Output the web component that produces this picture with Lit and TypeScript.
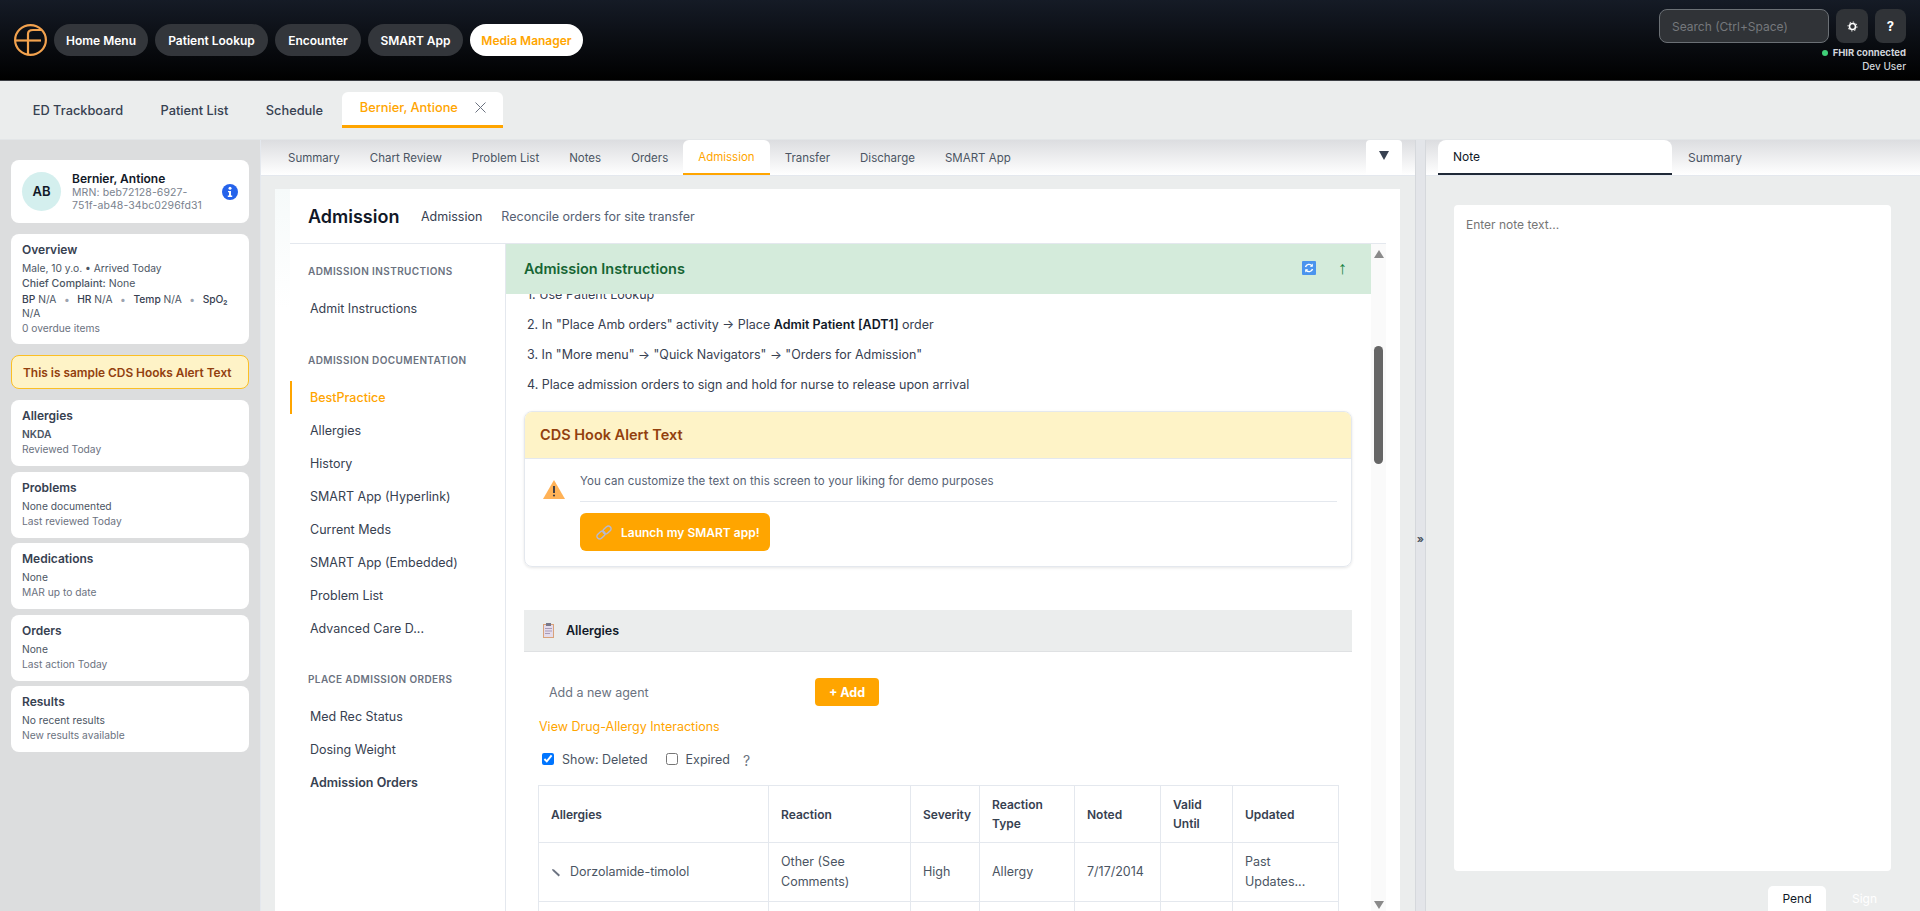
import {css, html, LitElement} from "lit"
import {customElement} from "lit/decorators.js"

const navPills = ["Home Menu", "Patient Lookup", "Encounter", "SMART App"]
const chartTabs = ["Summary", "Chart Review", "Problem List", "Notes", "Orders", "Admission", "Transfer", "Discharge", "SMART App"]
const summaries = [
  ["Allergies", "NKDA", "Reviewed Today"],
  ["Problems", "None documented", "Last reviewed Today"],
  ["Medications", "None", "MAR up to date"],
  ["Orders", "None", "Last action Today"],
  ["Results", "No recent results", "New results available"],
]
const sections = [
  {title: "Admission Instructions", items: ["Admit Instructions"]},
  {
    title: "Admission Documentation",
    items: ["BestPractice", "Allergies", "History", "SMART App (Hyperlink)", "Current Meds", "SMART App (Embedded)", "Problem List", "Advanced Care D..."],
  },
  {title: "Place Admission Orders", items: ["Med Rec Status", "Dosing Weight", "Admission Orders"]},
]

@customElement("app-root")
export class AppRoot extends LitElement {
  static styles = css`
    :host {
      display: block;
      height: 911px;
      overflow: hidden;
      font-family: Inter, "Liberation Sans", sans-serif;
      color: #374151;
      background: #ebeded;
    }
    * {
      box-sizing: border-box;
    }
    input,
    textarea {
      font-family: inherit;
    }
    .header {
      height: 81px;
      display: flex;
      align-items: flex-start;
      justify-content: space-between;
      padding: 0 14px;
      background: linear-gradient(#151b26, #000);
      border-bottom: 1px solid #3d4045;
    }
    .pills {
      display: flex;
      align-items: center;
      gap: 7px;
      margin-top: 24px;
    }
    .logo {
      width: 33px;
      height: 32px;
    }
    .pill {
      height: 32px;
      display: flex;
      align-items: center;
      justify-content: center;
      border-radius: 16px;
      background: #33363b;
      color: #fff;
      font-size: 12px;
      font-weight: 600;
    }
    .pill:nth-of-type(1) {
      width: 94px;
    }
    .pill:nth-of-type(2),
    .pill:nth-of-type(5) {
      width: 113px;
    }
    .pill:nth-of-type(3) {
      width: 86px;
    }
    .pill:nth-of-type(4) {
      width: 95px;
    }
    .pill.active {
      background: #fff;
      color: #ffa500;
    }
    .tools {
      display: flex;
      flex-direction: column;
      align-items: flex-end;
      padding-top: 9px;
    }
    .tool-row {
      display: flex;
      gap: 7px;
      height: 34px;
    }
    .search {
      width: 170px;
      height: 34px;
      padding: 0 12px;
      background: #303337;
      border: 1px solid #6b7075;
      border-radius: 8px;
      font-size: 12px;
      color: #fff;
      outline: none;
    }
    .search::placeholder {
      color: #75787c;
    }
    .tool-btn {
      width: 32px;
      height: 34px;
      display: flex;
      align-items: center;
      justify-content: center;
      border-radius: 8px;
      background: #303337;
      color: #fff;
      font-size: 13px;
      font-weight: 700;
    }
    .tool-btn.help {
      width: 31px;
    }
    .status {
      display: flex;
      align-items: center;
      gap: 5px;
      margin-top: 3px;
      height: 13px;
      font-size: 9.5px;
      font-weight: 700;
      color: #d1d5db;
    }
    .dot {
      width: 6px;
      height: 6px;
      border-radius: 50%;
      background: #3fcf78;
    }
    .user {
      margin-top: 1px;
      font-size: 10px;
      font-weight: 500;
      color: #d1d5db;
    }
    .top-tabs {
      height: 59px;
      padding: 11px 0 0 14px;
      display: flex;
      align-items: flex-start;
      border-bottom: 1px solid #e3e6e8;
    }
    .top-tab {
      height: 36px;
      padding: 0 18.75px;
      display: flex;
      align-items: center;
      font-size: 12.8px;
      font-weight: 500;
      color: #374151;
    }
    .top-tab.active {
      width: 161px;
      padding: 0 0 3px 18px;
      gap: 17px;
      background: #fff;
      color: #ffa500;
      border-bottom: 3px solid #ffa500;
      border-radius: 6px 6px 0 0;
    }
    .close {
      width: 11px;
      height: 11px;
    }
    .main {
      height: 771px;
      display: flex;
    }
    .side {
      width: 261px;
      padding: 20px 11px 0;
      background: #dcddde;
      border-right: 1px solid #e4e8ee;
      display: flex;
      flex-direction: column;
      gap: 5.5px;
    }
    .card {
      width: 238px;
      background: #fff;
      border-radius: 8px;
      padding: 8px 11px;
      font-size: 10.25px;
      line-height: 15px;
      color: #4b5563;
    }
    .card h4 {
      margin: 0 0 3px;
      font-size: 12px;
      line-height: 16px;
      font-weight: 600;
      color: #374151;
    }
    .card .muted {
      color: #6b7280;
    }
    .patient {
      height: 63px;
      margin-bottom: 5.5px;
      padding: 0 11px;
      display: flex;
      align-items: center;
    }
    .avatar {
      width: 39px;
      height: 39px;
      flex: none;
      border-radius: 50%;
      background: #d4efee;
      display: flex;
      align-items: center;
      justify-content: center;
      font-size: 13px;
      font-weight: 600;
      color: #111827;
    }
    .who {
      flex: 1;
      margin-left: 11px;
    }
    .who b {
      display: block;
      font-size: 12px;
      line-height: 14px;
      font-weight: 600;
      color: #111827;
    }
    .who span {
      display: block;
      font-size: 10.5px;
      line-height: 13px;
      letter-spacing: 0.1px;
      color: #7a828e;
    }
    .overview {
      height: 110px;
      margin-bottom: 5.5px;
    }
    .chief {
      font-size: 10.5px;
    }
    .chief b {
      font-weight: 500;
    }
    .vitals {
      margin: 1px 0;
      line-height: 14px;
    }
    .vitals b {
      font-weight: 500;
      color: #374151;
    }
    .vitals i {
      font-style: normal;
      margin: 0 7.5px;
      color: #9ca3af;
    }
    .side-alert {
      width: 238px;
      height: 34px;
      margin-bottom: 5.5px;
      padding-left: 11px;
      display: flex;
      align-items: center;
      background: #fef3c7;
      border: 1px solid #fbbf24;
      border-radius: 8px;
      font-size: 11.9px;
      font-weight: 600;
      color: #92400e;
    }
    .summary {
      height: 66px;
    }
    .nkda {
      font-weight: 600;
    }
    .center {
      width: 1154px;
      display: flex;
      flex-direction: column;
    }
    .bar {
      height: 36px;
      flex: none;
      display: flex;
      background: linear-gradient(#dcdde0, #fff);
      border-bottom: 1px solid #e4e8ee;
    }
    .center .bar {
      padding-left: 12px;
    }
    .chart-tab {
      padding: 0 15px;
      display: flex;
      align-items: center;
      font-size: 11.5px;
      color: #4b5563;
    }
    .chart-tab.active {
      background: #fff;
      color: #ffa500;
      border-bottom: 2px solid #ffa500;
      border-radius: 6px 6px 0 0;
    }
    .more {
      width: 36px;
      margin: 0 13px 0 auto;
      display: flex;
      align-items: center;
      justify-content: center;
      padding-bottom: 4px;
      background: #fff;
      border-radius: 4px 4px 0 0;
    }
    .page {
      height: 722px;
      margin: 13px 15px 0 14px;
      padding-right: 14px;
      display: flex;
      background: #fff;
    }
    .strip {
      width: 15px;
      flex: none;
      height: 120px;
      background: linear-gradient(#f6fafa, #fff);
    }
    .page-body {
      flex: 1;
      min-width: 0;
      display: flex;
      flex-direction: column;
    }
    .page-head {
      height: 55px;
      flex: none;
      padding: 0 0 0 18px;
      display: flex;
      align-items: center;
      border-bottom: 1px solid #e4e8ee;
      font-size: 12.5px;
    }
    .page-head h2 {
      margin: 0 22px 0 0;
      width: 91px;
      font-size: 18px;
      font-weight: 600;
      color: #111827;
    }
    .page-head .crumb {
      margin-right: 19px;
      color: #374151;
    }
    .page-head .desc {
      color: #566173;
    }
    .cols {
      flex: 1;
      min-height: 0;
      display: flex;
    }
    .nav {
      width: 216px;
      flex: none;
      padding-top: 20px;
      border-right: 1px solid #e4e8ee;
    }
    .nav h5 {
      margin: 0;
      padding-left: 18px;
      height: 14px;
      line-height: 14px;
      font-size: 10px;
      font-weight: 600;
      letter-spacing: 0.4px;
      text-transform: uppercase;
      color: #6b7280;
    }
    .nav ul {
      list-style: none;
      margin: 14px 0 27.5px;
      padding: 0;
    }
    .nav li {
      height: 33px;
      line-height: 33px;
      padding-left: 20px;
      font-size: 12.5px;
      color: #374151;
    }
    .nav li.current {
      padding-left: 18px;
      border-left: 2px solid #ffa500;
      color: #ffa500;
      font-weight: 500;
    }
    .nav li.strong {
      font-weight: 600;
    }
    .content {
      flex: 1;
      min-width: 0;
      display: flex;
    }
    .scroll {
      flex: 1;
      min-width: 0;
      overflow: hidden;
    }
    .instr-head {
      height: 50px;
      padding: 0 0 2px 18px;
      padding-right: 24px;
      display: flex;
      align-items: center;
      background: #d4ebdb;
      font-size: 14.5px;
      font-weight: 600;
      color: #166534;
    }
    .instr-head span {
      flex: 1;
    }
    .up {
      margin-left: 22px;
      font-family: "Liberation Sans", sans-serif;
      font-size: 18px;
      font-weight: 400;
      color: #15803d;
    }
    .scroll-inner {
      height: 618px;
      overflow: hidden;
      padding: 0 19px 0 18px;
    }
    ol {
      list-style: none;
      margin: -14px 0 11px;
      padding-left: 3px;
      font-size: 12.5px;
      color: #374151;
    }
    ol li {
      height: 30px;
      line-height: 30px;
    }
    ol b {
      font-weight: 600;
      color: #111827;
    }
    .cds {
      height: 156px;
      border: 1px solid #e4e8ee;
      border-radius: 8px;
      box-shadow: 0 1px 3px rgba(0, 0, 0, 0.1);
      overflow: hidden;
    }
    .cds-head {
      height: 47px;
      padding: 0 0 2px 15px;
      display: flex;
      align-items: center;
      background: #fef3c7;
      border-bottom: 1px solid #e4e8ee;
      font-size: 14.5px;
      font-weight: 600;
      color: #92400e;
    }
    .cds-body {
      display: flex;
      padding: 12px 14px 0 18px;
      gap: 15px;
    }
    .warn {
      width: 22px;
      height: 19px;
      margin-top: 9px;
      flex: none;
    }
    .cds-main {
      flex: 1;
    }
    .cds-text {
      height: 31px;
      line-height: 20px;
      font-size: 11.5px;
      letter-spacing: 0.1px;
      color: #566173;
      border-bottom: 1px solid #e4e8ee;
    }
    .launch {
      width: 190px;
      height: 38px;
      margin-top: 11px;
      padding-left: 16px;
      display: flex;
      align-items: center;
      gap: 9px;
      background: #ffa500;
      border-radius: 6px;
      font-size: 12px;
      font-weight: 600;
      color: #fff;
    }
    .sec-head {
      height: 42px;
      margin-top: 43px;
      padding-left: 19px;
      display: flex;
      align-items: center;
      gap: 12px;
      background: #ebeded;
      border-bottom: 1px solid #dfe1e3;
      font-size: 12.5px;
      font-weight: 600;
      color: #111827;
    }
    .add-row {
      display: flex;
      align-items: center;
      margin-top: 26px;
      padding-left: 25px;
      height: 28px;
    }
    .agent {
      width: 266px;
      border: 0;
      padding: 0;
      outline: none;
      font-size: 12.5px;
    }
    .agent::placeholder {
      color: #6b7280;
      opacity: 1;
    }
    .add {
      width: 64px;
      height: 28px;
      display: flex;
      align-items: center;
      justify-content: center;
      background: #ffa500;
      border-radius: 4px;
      font-size: 12.5px;
      font-weight: 700;
      color: #fff;
    }
    .link {
      margin: 12px 0 0 15px;
      line-height: 18px;
      font-size: 12.5px;
      color: #ffa500;
    }
    .checks {
      display: flex;
      align-items: center;
      height: 20px;
      margin: 13px 0 16px 18px;
      font-size: 12.5px;
      color: #4b5563;
    }
    .checks input {
      width: 12px;
      height: 12px;
      margin: 0 8px 0 0;
      flex: none;
    }
    .checks span {
      margin-right: 18px;
    }
    .checks .hint {
      margin: 2px 0 0 -5px;
      color: #6b7280;
      font-size: 14px;
    }
    table {
      width: 800px;
      margin-left: 14px;
      border-collapse: collapse;
      table-layout: fixed;
      font-size: 12.5px;
    }
    th,
    td {
      border: 1px solid #e4e8ee;
      padding: 0 12px;
      text-align: left;
      vertical-align: middle;
      line-height: 20px;
      font-weight: 400;
      color: #4b5563;
    }
    th {
      height: 57px;
      font-size: 12px;
      line-height: 19px;
      font-weight: 600;
      color: #374151;
    }
    td {
      height: 59px;
    }
    .c1 {
      width: 230px;
    }
    .c2 {
      width: 142px;
    }
    .c3 {
      width: 69px;
    }
    .c4 {
      width: 95px;
    }
    .c5 {
      width: 86px;
    }
    .c6 {
      width: 72px;
    }
    .c7 {
      width: 106px;
    }
    .agent-cell {
      display: flex;
      align-items: center;
      gap: 9px;
    }
    .scrollbar {
      width: 15px;
      flex: none;
      display: flex;
      flex-direction: column;
      align-items: center;
      padding-top: 6px;
      background: #fafafa;
      position: relative;
    }
    .thumb {
      width: 9px;
      height: 118px;
      margin-top: 88px;
      border-radius: 5px;
      background: #666;
    }
    .arrow-down {
      position: absolute;
      left: 2.5px;
      top: 657px;
    }
    .split {
      width: 11px;
      flex: none;
      padding-top: 392px;
      text-align: center;
      background: #e3e5e9;
      border-left: 1px solid #d5d8dc;
      border-right: 1px solid #d5d8dc;
      font-size: 11px;
      line-height: 14px;
      font-weight: 700;
      color: #4b5563;
    }
    .right {
      flex: 1;
      min-width: 0;
      display: flex;
      flex-direction: column;
    }
    .right .bar {
      padding-left: 12px;
    }
    .note-tab {
      width: 234px;
      padding-left: 15px;
      display: flex;
      align-items: center;
      background: #fff;
      border-bottom: 2px solid #1f2937;
      border-radius: 8px 8px 0 0;
      font-size: 12px;
      color: #111827;
    }
    .sum-tab {
      padding-left: 16px;
      display: flex;
      align-items: center;
      font-size: 12px;
      color: #4b5563;
    }
    .note {
      width: 437px;
      height: 666px;
      flex: none;
      display: block;
      margin: 29px 0 0 28px;
      padding: 12px;
      border: 0;
      border-radius: 4px;
      outline: none;
      resize: none;
      background: #fff;
      font-size: 12px;
      line-height: 15px;
    }
    .note::placeholder {
      color: #757575;
    }
    .actions {
      display: flex;
      flex: none;
      margin: 15px 0 0 342px;
      font-size: 12px;
      line-height: 25px;
    }
    .pend {
      width: 58px;
      height: 30px;
      text-align: center;
      background: #fff;
      border-radius: 5px 5px 0 0;
      color: #111827;
    }
    .sign {
      margin-left: 26px;
      color: #fff;
    }
  `

  private renderHeader() {
    return html`
      <div class="header">
        <div class="pills">
          <svg class="logo" viewBox="0 0 33 32" fill="none" stroke="#f2a24e" stroke-width="2.2">
            <ellipse cx="16.5" cy="16" rx="15.4" ry="14.9" />
            <path d="M14 31V10Q14 6 19 6H28" />
            <path d="M1.5 16.5H27" />
          </svg>
          ${navPills.map((p) => html`<div class="pill">${p}</div>`)}
          <div class="pill active">Media Manager</div>
        </div>
        <div class="tools">
          <div class="tool-row">
            <input class="search" placeholder="Search (Ctrl+Space)" />
            <div class="tool-btn">
              <svg width="11" height="11" viewBox="0 0 11 11" fill="none" stroke="#fff">
                <circle cx="5.5" cy="5.5" r="3" stroke-width="1.6" />
                <circle cx="5.5" cy="5.5" r="4.5" stroke-width="1" stroke-dasharray="1.4 2.1" />
              </svg>
            </div>
            <div class="tool-btn help">?</div>
          </div>
          <div class="status"><span class="dot"></span>FHIR connected</div>
          <div class="user">Dev User</div>
        </div>
      </div>
      <div class="top-tabs">
        <div class="top-tab">ED Trackboard</div>
        <div class="top-tab">Patient List</div>
        <div class="top-tab">Schedule</div>
        <div class="top-tab active">
          Bernier, Antione
          <svg class="close" viewBox="0 0 11 11" stroke="#6b7280"><path d="M.5.5l10 10M10.5.5l-10 10" /></svg>
        </div>
      </div>
    `
  }

  private renderSide() {
    return html`
      <div class="side">
        <div class="card patient">
          <div class="avatar">AB</div>
          <div class="who">
            <b>Bernier, Antione</b>
            <span>MRN: beb72128-6927-<br />751f-ab48-34bc0296fd31</span>
          </div>
          <svg width="16" height="16" viewBox="0 0 16 16">
            <circle cx="8" cy="8" r="8" fill="#2563eb" />
            <circle cx="8" cy="4.2" r="1.5" fill="#fff" />
            <path d="M6 7h3v4.6h1.2V13H5.8v-1.4H7V8.3H6z" fill="#fff" />
          </svg>
        </div>
        <div class="card overview">
          <h4>Overview</h4>
          <div>Male, 10 y.o. • Arrived Today</div>
          <div class="chief"><b>Chief Complaint:</b> None</div>
          <div class="vitals">
            <b>BP</b> N/A<i>•</i><b>HR</b> N/A<i>•</i><b>Temp</b> N/A<i>•</i><b>SpO₂</b> N/A
          </div>
          <div class="muted">0 overdue items</div>
        </div>
        <div class="side-alert">This is sample CDS Hooks Alert Text</div>
        ${summaries.map(
          ([title, line, sub]) => html`
            <div class="card summary">
              <h4>${title}</h4>
              <div class=${line === "NKDA" ? "nkda" : ""}>${line}</div>
              <div class="muted">${sub}</div>
            </div>
          `,
        )}
      </div>
    `
  }

  private renderNav() {
    return html`
      <div class="nav">
        ${sections.map(
          (s) => html`
            <h5>${s.title}</h5>
            <ul>
              ${s.items.map(
                (i) => html`
                  <li class=${i === "BestPractice" ? "current" : i === "Admission Orders" ? "strong" : ""}>${i}</li>
                `,
              )}
            </ul>
          `,
        )}
      </div>
    `
  }

  private renderAllergies() {
    return html`
      <div class="sec-head">
        <svg width="11" height="15" viewBox="0 0 11 15">
          <rect x=".5" y="1.5" width="10" height="13" fill="#e4dcec" stroke="#d9a27a" />
          <rect x="3" y="0" width="5" height="3" fill="#77778a" />
          <path d="M2 5.5h7M2 8h7M2 10.5h5" stroke="#a99bb8" />
        </svg>
        Allergies
      </div>
      <div class="add-row">
        <input class="agent" placeholder="Add a new agent" />
        <div class="add">+ Add</div>
      </div>
      <div class="link">View Drug-Allergy Interactions</div>
      <div class="checks">
        <input type="checkbox" checked /><span>Show: Deleted</span>
        <input type="checkbox" /><span>Expired</span>
        <div class="hint">?</div>
      </div>
      <table>
        <colgroup>
          <col class="c1" /><col class="c2" /><col class="c3" /><col class="c4" /><col class="c5" /><col class="c6" /><col class="c7" />
        </colgroup>
        <tr>
          <th>Allergies</th>
          <th>Reaction</th>
          <th>Severity</th>
          <th>Reaction Type</th>
          <th>Noted</th>
          <th>Valid Until</th>
          <th>Updated</th>
        </tr>
        <tr>
          <td>
            <div class="agent-cell">
              <svg width="10" height="9" viewBox="0 0 10 9"><path d="M1 1l2 .4 6 5.6-1.4 1.4-6-5.6z" fill="#6b7280" /></svg>
              Dorzolamide-timolol
            </div>
          </td>
          <td>Other (See Comments)</td>
          <td>High</td>
          <td>Allergy</td>
          <td>7/17/2014</td>
          <td></td>
          <td>Past Updates...</td>
        </tr>
        <tr>
          <td></td>
          <td></td>
          <td></td>
          <td></td>
          <td></td>
          <td></td>
          <td></td>
        </tr>
      </table>
    `
  }

  private renderCenter() {
    return html`
      <div class="center">
        <div class="bar">
          ${chartTabs.map((t) => html`<div class="chart-tab ${t === "Admission" ? "active" : ""}">${t}</div>`)}
          <div class="more">
            <svg width="10" height="9" viewBox="0 0 10 9"><path d="M0 0h10L5 9z" fill="#374151" /></svg>
          </div>
        </div>
        <div class="page">
          <div class="strip"></div>
          <div class="page-body">
            <div class="page-head">
              <h2>Admission</h2>
              <span class="crumb">Admission</span>
              <span class="desc">Reconcile orders for site transfer</span>
            </div>
            <div class="cols">
              ${this.renderNav()}
              <div class="content">
                <div class="scroll">
                  <div class="instr-head">
                    <span>Admission Instructions</span>
                    <svg width="14" height="14" viewBox="0 0 14 14">
                      <rect width="14" height="14" rx="1" fill="#4b94ee" />
                      <path d="M3.5 6A3.6 3.6 0 0 1 10 5M10.5 8A3.6 3.6 0 0 1 4 9" fill="none" stroke="#fff" stroke-width="1.4" />
                      <path d="M10.8 2.6V5.8H7.8zM3.2 11.4V8.2H6.2z" fill="#fff" />
                    </svg>
                    <div class="up">↑</div>
                  </div>
                  <div class="scroll-inner">
                    <ol>
                      <li>1. Use Patient Lookup</li>
                      <li>2. In "Place Amb orders" activity → Place <b>Admit Patient [ADT1]</b> order</li>
                      <li>3. In "More menu" → "Quick Navigators" → "Orders for Admission"</li>
                      <li>4. Place admission orders to sign and hold for nurse to release upon arrival</li>
                    </ol>
                    <div class="cds">
                      <div class="cds-head">CDS Hook Alert Text</div>
                      <div class="cds-body">
                        <svg class="warn" viewBox="0 0 22 19">
                          <path d="M11 0L22 19H0z" fill="#ffb257" />
                          <path d="M11 6v7" stroke="#3f3f46" stroke-width="2" />
                          <circle cx="11" cy="15.5" r="1.1" fill="#3f3f46" />
                        </svg>
                        <div class="cds-main">
                          <div class="cds-text">You can customize the text on this screen to your liking for demo purposes</div>
                          <div class="launch">
                            <svg width="16" height="15" viewBox="0 0 16 15" fill="none" stroke="#b7b9d0" stroke-width="1.5">
                              <rect x="-4.5" y="-2.7" width="9" height="5.4" rx="2.7" transform="translate(5 10) rotate(-42)" />
                              <rect x="-4.5" y="-2.7" width="9" height="5.4" rx="2.7" transform="translate(11 5) rotate(-42)" />
                            </svg>
                            Launch my SMART app!
                          </div>
                        </div>
                      </div>
                    </div>
                    ${this.renderAllergies()}
                  </div>
                </div>
                <div class="scrollbar">
                  <svg width="10" height="8" viewBox="0 0 10 8"><path d="M5 0L10 8H0z" fill="#8a8a8a" /></svg>
                  <div class="thumb"></div>
                  <svg class="arrow-down" width="10" height="8" viewBox="0 0 10 8"><path d="M5 8L10 0H0z" fill="#8a8a8a" /></svg>
                </div>
              </div>
            </div>
          </div>
        </div>
      </div>
    `
  }

  render() {
    return html`
      ${this.renderHeader()}
      <div class="main">
        ${this.renderSide()} ${this.renderCenter()}
        <div class="split">»</div>
        <div class="right">
          <div class="bar">
            <div class="note-tab">Note</div>
            <div class="sum-tab">Summary</div>
          </div>
          <textarea class="note" placeholder="Enter note text..."></textarea>
          <div class="actions">
            <div class="pend">Pend</div>
            <div class="sign">Sign</div>
          </div>
        </div>
      </div>
    `
  }
}
